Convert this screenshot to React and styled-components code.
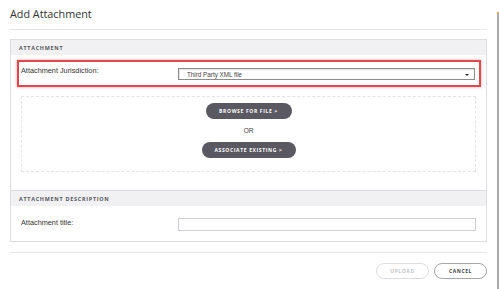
import React from "react";
import styled, { createGlobalStyle } from "styled-components";

const Global = createGlobalStyle`
  html, body { margin: 0; padding: 0; background: #fff; }
  body { font-family: "Liberation Sans", Arial, sans-serif; }
  * { box-sizing: border-box; }
`;

const Page = styled.div`
  display: flex;
  width: 499px;
  height: 289px;
  overflow: hidden;
  background: #fff;
`;

const Dialog = styled.div`
  width: 497px;
  padding: 0 10px;
  display: flex;
  flex-direction: column;
`;

const Edge = styled.div`
  width: 2px;
  margin-top: 12px;
  background: #a9a9ad;
  border-top: 2px solid #e8a25a;
`;

const Title = styled.h1`
  margin: 7px 0 8px;
  font-family: "Open Sans", sans-serif;
  font-weight: 400;
  font-size: 10.8px;
  line-height: 14px;
  color: #333;
`;

const Divider = styled.div`
  height: 1px;
  margin-top: ${(p) => p.$mt || 0}px;
  background: #e6e6e8;
`;

const Panel = styled.div`
  margin-top: 9px;
  border: 1px solid #dcdde1;
  display: flex;
  flex-direction: column;
`;

const SectionHeader = styled.div`
  height: ${(p) => (p.$bordered ? "16px" : "15px")};
  border-top: ${(p) => (p.$bordered ? "1px solid #dcdde1" : "none")};
  background: #f1f1f3;
  padding: 0 8px;
  font-family: "Open Sans", sans-serif;
  font-weight: 700;
  font-size: 5.4px;
  letter-spacing: 0.75px;
  text-transform: uppercase;
  color: #55565c;
  display: flex;
  align-items: center;
`;

const SectionBody = styled.div`
  padding: 5px 0 18px;
  display: flex;
  flex-direction: column;
`;

const HighlightRow = styled.div`
  margin: 0 5px 0 6px;
  border: 2px solid #e0484d;
  box-shadow: 0 0 3px rgba(224, 72, 77, 0.5);
  padding: 4px 4px 5px 2px;
  display: grid;
  grid-template-columns: 157px 1fr;
  align-items: start;
`;

const Label = styled.div`
  font-family: "Liberation Sans", Arial, sans-serif;
  font-size: 7.3px;
  line-height: 9px;
  color: #333;
`;

const Select = styled.div`
  margin-top: 2px;
  height: 12px;
  border: 1px solid #8c8c8c;
  box-shadow: inset 1px 1px 1px rgba(0, 0, 0, 0.12);
  background: #fff;
  display: flex;
  align-items: center;
  justify-content: space-between;
  padding: 0 5px 0 8px;
  font-family: "Liberation Sans", Arial, sans-serif;
  font-size: 6.3px;
  color: #444;
`;

const Caret = styled.span`
  width: 0;
  height: 0;
  border-left: 2px solid transparent;
  border-right: 2px solid transparent;
  border-top: 2.5px solid #222;
  margin-top: 1px;
`;

const DropZone = styled.div`
  margin: 9px 10px 0;
  border: 1px dashed #e3e3e7;
  padding: 6px 0 13px;
  display: flex;
  flex-direction: column;
  align-items: center;
  gap: 6px;
`;

const PillButton = styled.button`
  height: 16px;
  width: ${(p) => p.$w}px;
  border: none;
  border-radius: 8px;
  background: #5a5961;
  color: #fff;
  font-family: "Open Sans", sans-serif;
  font-weight: 700;
  font-size: 5px;
  letter-spacing: 0.65px;
  padding: 0;
  display: flex;
  align-items: center;
  justify-content: center;
`;

const Or = styled.div`
  font-family: "Liberation Sans", Arial, sans-serif;
  font-size: 6.5px;
  line-height: 11px;
  color: #444;
`;

const FieldRow = styled.div`
  padding: 12px 10px 10px 10px;
  display: grid;
  grid-template-columns: 157px 1fr;
  align-items: start;
`;

const Input = styled.div`
  height: 13px;
  border: 1px solid #cfcfd3;
  background: #fff;
`;

const Footer = styled.div`
  padding-top: 10px;
  display: flex;
  justify-content: flex-end;
  gap: 5px;
`;

const FooterButton = styled.button`
  height: 16px;
  width: ${(p) => p.$w}px;
  border-radius: 8px;
  background: #fff;
  border: 1px solid ${(p) => (p.$disabled ? "#dcdde1" : "#a6a6ab")};
  color: ${(p) => (p.$disabled ? "#c5c6ca" : "#444")};
  font-family: "Open Sans", sans-serif;
  font-weight: 700;
  font-size: 5px;
  letter-spacing: 0.6px;
  padding: 0;
  display: flex;
  align-items: center;
  justify-content: center;
`;

export default function App() {
  return (
    <>
      <Global />
      <Page>
        <Dialog>
          <Title>Add Attachment</Title>
          <Divider />
          <Panel>
            <SectionHeader>Attachment</SectionHeader>
            <SectionBody>
              <HighlightRow>
                <Label>Attachment Jurisdiction:</Label>
                <Select>
                  <span>Third Party XML file</span>
                  <Caret />
                </Select>
              </HighlightRow>
              <DropZone>
                <PillButton $w={86}>BROWSE FOR FILE &gt;</PillButton>
                <Or>OR</Or>
                <PillButton $w={94}>ASSOCIATE EXISTING &gt;</PillButton>
              </DropZone>
            </SectionBody>
            <SectionHeader $bordered>Attachment Description</SectionHeader>
            <FieldRow>
              <Label>Attachment title:</Label>
              <Input />
            </FieldRow>
          </Panel>
          <Divider $mt={10} />
          <Footer>
            <FooterButton $w={53} $disabled>UPLOAD</FooterButton>
            <FooterButton $w={53}>CANCEL</FooterButton>
          </Footer>
        </Dialog>
        <Edge />
      </Page>
    </>
  );
}
